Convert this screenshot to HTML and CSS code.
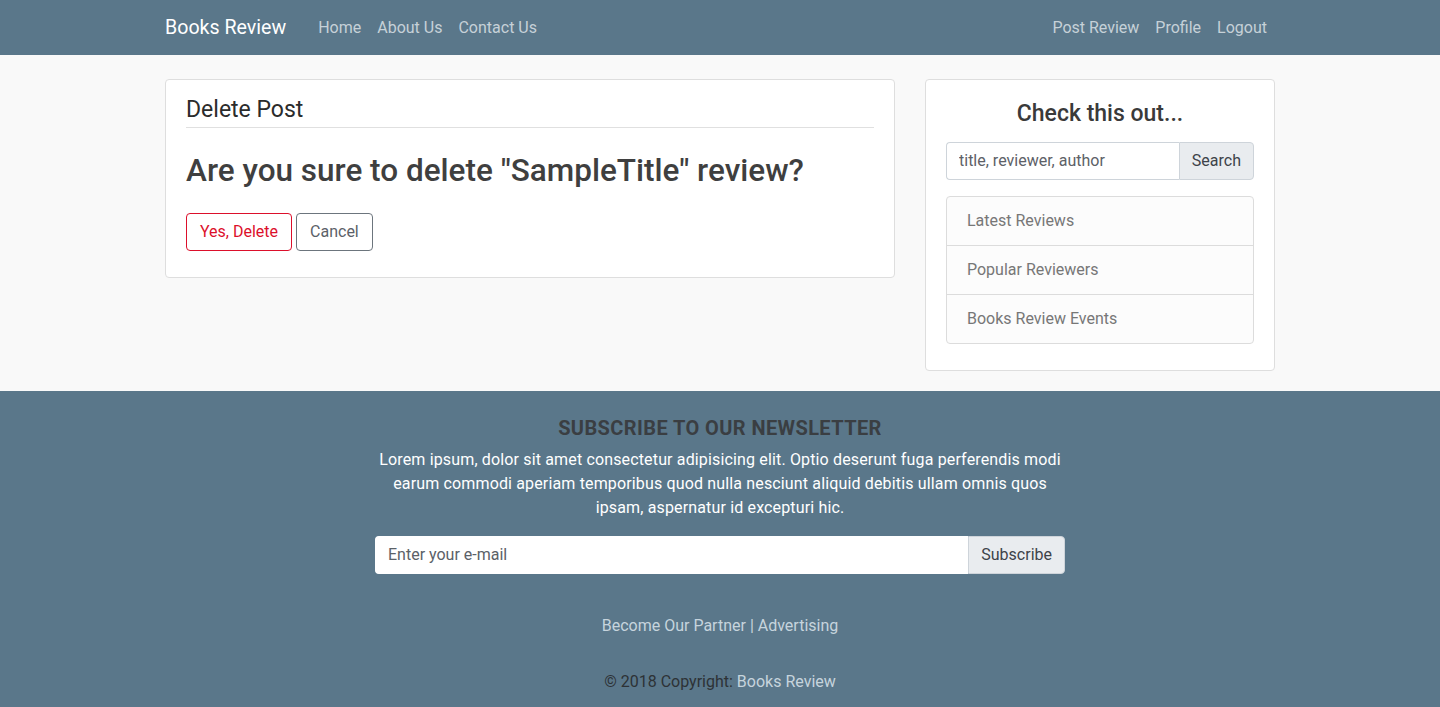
FILE: index.html
```html
<!DOCTYPE html>
<html lang="en">
<head>
<meta charset="utf-8">
<title>Books Review - Delete Post</title>
<link rel="stylesheet" href="styles.css">
</head>
<body>
<nav class="navbar">
  <div class="container nav-inner">
    <a class="brand" href="#">Books Review</a>
    <ul class="nav-links">
      <li><a href="#">Home</a></li>
      <li><a href="#">About Us</a></li>
      <li><a href="#">Contact Us</a></li>
    </ul>
    <ul class="nav-links nav-right">
      <li><a href="#">Post Review</a></li>
      <li><a href="#">Profile</a></li>
      <li><a href="#">Logout</a></li>
    </ul>
  </div>
</nav>

<main class="container main">
  <section class="card main-card">
    <h4 class="card-title">Delete Post</h4>
    <h2 class="confirm">Are you sure to delete "SampleTitle" review?</h2>
    <div class="actions">
      <button class="btn btn-danger">Yes, Delete</button>
      <button class="btn btn-secondary">Cancel</button>
    </div>
  </section>

  <aside class="card side-card">
    <h4 class="side-title">Check this out...</h4>
    <div class="input-group">
      <input class="input" type="text" placeholder="title, reviewer, author">
      <span class="addon">Search</span>
    </div>
    <ul class="list-group">
      <li><a href="#">Latest Reviews</a></li>
      <li><a href="#">Popular Reviewers</a></li>
      <li><a href="#">Books Review Events</a></li>
    </ul>
  </aside>
</main>

<footer class="footer">
  <div class="footer-inner">
    <h5 class="news-title">SUBSCRIBE TO OUR NEWSLETTER</h5>
    <p class="news-text">Lorem ipsum, dolor sit amet consectetur adipisicing elit. Optio deserunt fuga perferendis modi earum commodi aperiam temporibus quod nulla nesciunt aliquid debitis ullam omnis quos ipsam, aspernatur id excepturi hic.</p>
    <div class="input-group footer-group">
      <input class="input" type="email" placeholder="Enter your e-mail">
      <span class="addon">Subscribe</span>
    </div>
    <p class="partner"><a href="#">Become Our Partner</a> | <a href="#">Advertising</a></p>
    <p class="copyright">© 2018 Copyright: <a href="#">Books Review</a></p>
  </div>
</footer>
</body>
</html>
```

FILE: styles.css
```css
* { box-sizing: border-box; }
html, body { margin: 0; padding: 0; }
body {
  font-family: Roboto, "Liberation Sans", sans-serif;
  font-size: 16px;
  line-height: 1.5;
  color: #212529;
  background: #f9f9f9;
}
a { text-decoration: none; }
ul { list-style: none; margin: 0; padding: 0; }
h2, h4, h5, p { margin: 0; }

.container {
  width: 1140px;
  margin: 0 auto;
  padding: 0 15px;
}

/* navbar */
.navbar {
  background: #5a778a;
  height: 55px;
}
.nav-inner {
  display: flex;
  align-items: center;
  height: 55px;
}
.brand {
  color: #fff;
  font-size: 19.6px;
  font-weight: 400;
  margin-right: 24px;
}
.nav-links { display: flex; }
.nav-links a {
  display: block;
  padding: 8px 8px;
  color: #c6d1d8;
  font-size: 16px;
}
.nav-right { margin-left: auto; }

/* main */
.main {
  display: flex;
  gap: 30px;
  align-items: flex-start;
  padding-top: 24px;
  padding-bottom: 20px;
}
.card {
  background: #fff;
  border: 1px solid #dedede;
  border-radius: 4px;
}
.main-card {
  width: 730px;
  padding: 15px 20px 26px;
}
.card-title {
  font-size: 23px;
  font-weight: 400;
  color: #2b2b2b;
  line-height: 1.3;
  padding-bottom: 2px;
  border-bottom: 1px solid #e0e0e0;
}
.confirm {
  font-size: 31.5px;
  font-weight: 500;
  color: #3f3f3f;
  line-height: 1.2;
  margin-top: 24px;
  margin-bottom: 23px;
}
.actions { display: flex; gap: 4px; }
.btn {
  font-family: inherit;
  font-size: 16px;
  line-height: 24px;
  height: 38px;
  padding: 6px 13px;
  background: #fff;
  border-radius: 4px;
  cursor: pointer;
}
.btn-danger { color: #dc0f2b; border: 1px solid #dc0f2b; }
.btn-secondary { color: #5b6168; border: 1px solid #6c757d; }

.side-card {
  width: 350px;
  padding: 19px 20px 26px;
}
.side-title {
  text-align: center;
  font-size: 23px;
  font-weight: 500;
  color: #3a3a3a;
  line-height: 1.3;
  margin-bottom: 13px;
}
.input-group {
  display: flex;
  height: 38px;
}
.input {
  flex: 1;
  min-width: 0;
  font-family: inherit;
  font-size: 16px;
  padding: 6px 12px;
  border: 1px solid #ced4da;
  border-right: none;
  border-radius: 4px 0 0 4px;
  background: #fff;
  color: #495057;
}
.input::placeholder { color: #5d6167; opacity: 1; }
.addon {
  display: flex;
  align-items: center;
  padding: 0 12px;
  background: #e9ecef;
  border: 1px solid #ced4da;
  border-radius: 0 4px 4px 0;
  color: #3d4349;
  font-size: 16px;
}
.list-group {
  margin-top: 16px;
  border: 1px solid #dcdcdc;
  border-radius: 4px;
  background: #fcfcfc;
}
.list-group li + li { border-top: 1px solid #dcdcdc; }
.list-group a {
  display: block;
  padding: 12px 20px;
  color: #777;
}

/* footer */
.footer {
  background: #5a778a;
  padding: 25px 0 20px;
  text-align: center;
}
.footer-inner {
  width: 690px;
  margin: 0 auto;
}
.news-title {
  font-size: 20px;
  font-weight: 700;
  letter-spacing: 0.4px;
  color: #3a3e42;
  line-height: 1.2;
  margin-bottom: 8px;
}
.news-text {
  color: #fff;
  margin-bottom: 16px;
  letter-spacing: 0.15px;
}
.footer-group .input { border-color: #fff; }
.footer-group .input::placeholder { color: #5b6168; }
.partner {
  margin-top: 40px;
  color: #c6d4dd;
}
.partner a, .copyright a { color: #c6d4dd; }
.copyright {
  margin-top: 32px;
  color: #2d3236;
}
```
